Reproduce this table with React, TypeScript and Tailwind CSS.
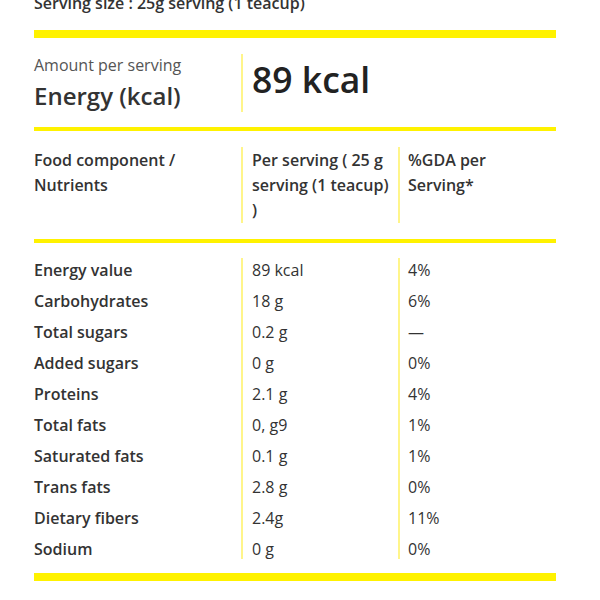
import React from "react";

const rows: [string, string, string][] = [
  ["Energy value", "89 kcal", "4%"],
  ["Carbohydrates", "18 g", "6%"],
  ["Total sugars", "0.2 g", "—"],
  ["Added sugars", "0 g", "0%"],
  ["Proteins", "2.1 g", "4%"],
  ["Total fats", "0, g9", "1%"],
  ["Saturated fats", "0.1 g", "1%"],
  ["Trans fats", "2.8 g", "0%"],
  ["Dietary fibers", "2.4g", "11%"],
  ["Sodium", "0 g", "0%"],
];

export default function App() {
  return (
    <div className="w-[600px] h-[600px] overflow-hidden bg-white text-[#333] font-['Open_Sans',sans-serif]">
      <div className="ml-[34px] w-[522px] -mt-[9px]">
        <p className="text-[16px] font-semibold leading-6">Serving size : 25g serving (1 teacup)</p>
        <div className="mt-[15px] h-2 bg-[#fff200]" />

        <div className="grid grid-cols-[207px_1fr] pt-4 pb-[15px]">
          <div className="pt-[1px]">
            <div className="text-[16px] leading-5 text-[#555]">Amount per serving</div>
            <div className="mt-[5px] text-[24px] leading-8 font-semibold text-[#333]">Energy (kcal)</div>
          </div>
          <div className="border-l-2 border-[#fff58a] pl-[9px] pt-[1px]">
            <div className="text-[35.5px] leading-[48px] font-semibold text-[#222]">89 kcal</div>
          </div>
        </div>
        <div className="h-1 bg-[#fff200]" />

        <div className="grid grid-cols-[207px_157px_1fr] pt-4 pb-4 text-[16px] font-semibold leading-[25px]">
          <div className="pt-[1px] pr-4">
            Food component /<br />Nutrients
          </div>
          <div className="border-l-2 border-[#fff58a] pl-[9px] pr-[4px] pt-[1px]">
            Per serving ( 25 g<br />serving (1 teacup)<br />)
          </div>
          <div className="border-l-2 border-[#fff58a] pl-[8px] pr-[8px] pt-[1px]">
            %GDA per<br />Serving*
          </div>
        </div>
        <div className="h-1 bg-[#fff200]" />

        <div className="grid grid-cols-[207px_157px_1fr] pt-[15px] pb-[14px] text-[16px] leading-5">
          <div className="flex flex-col gap-[11px] pt-[2px] font-semibold">
            {rows.map((r) => (
              <div key={r[0]}>{r[0]}</div>
            ))}
          </div>
          <div className="flex flex-col gap-[11px] pt-[2px] border-l-2 border-[#fff58a] pl-[9px]">
            {rows.map((r) => (
              <div key={r[0]}>{r[1]}</div>
            ))}
          </div>
          <div className="flex flex-col gap-[11px] pt-[2px] border-l-2 border-[#fff58a] pl-[8px]">
            {rows.map((r) => (
              <div key={r[0]}>{r[2]}</div>
            ))}
          </div>
        </div>
        <div className="h-2 bg-[#fff200]" />
      </div>
    </div>
  );
}
